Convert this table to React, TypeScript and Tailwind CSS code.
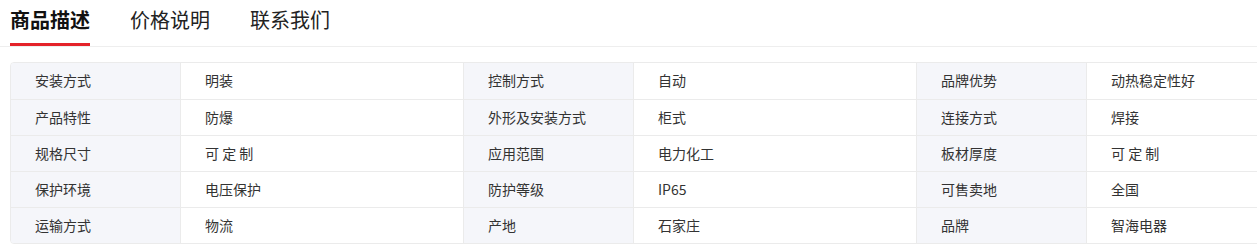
import React from "react";

const rows: [string, string][][] = [
  [
    ["安装方式", "明装"],
    ["控制方式", "自动"],
    ["品牌优势", "动热稳定性好"],
  ],
  [
    ["产品特性", "防爆"],
    ["外形及安装方式", "柜式"],
    ["连接方式", "焊接"],
  ],
  [
    ["规格尺寸", "可 定 制"],
    ["应用范围", "电力化工"],
    ["板材厚度", "可 定 制"],
  ],
  [
    ["保护环境", "电压保护"],
    ["防护等级", "IP65"],
    ["可售卖地", "全国"],
  ],
  [
    ["运输方式", "物流"],
    ["产地", "石家庄"],
    ["品牌", "智海电器"],
  ],
];

const tabs = ["商品描述", "价格说明", "联系我们"];

const App = () => {
  return (
    <div
      className="w-[1257px] h-[247px] overflow-hidden bg-white text-[#333]"
      style={{ fontFamily: '"Noto Sans CJK SC", "Noto Sans", sans-serif' }}
    >
      <div className="flex gap-10 px-[10px] h-[47px] border-b border-[#eeeeee]">
        {tabs.map((t, i) => (
          <div
            key={t}
            className={
              i === 0
                ? "h-[46px] pt-[5px] text-[20px] leading-[30px] font-bold text-[#111] border-b-[3px] border-[#e4222a]"
                : "h-[46px] pt-[5px] text-[20px] leading-[30px] text-[#222]"
            }
          >
            {t}
          </div>
        ))}
      </div>

      <div className="mt-[15px] ml-[10px] w-[1360px] border border-[#ebebeb] rounded-[4px] overflow-hidden">
        {rows.map((row, r) => (
          <div
            key={r}
            className={
              r === 0
                ? "grid grid-cols-[170px_283px_170px_283px_170px_283px] h-[36px]"
                : "grid grid-cols-[170px_283px_170px_283px_170px_283px] h-[36px] border-t border-[#ebebeb]"
            }
          >
            {row.map(([k, v]) => (
              <React.Fragment key={k}>
                <div className="flex items-center pl-[24px] pb-[1px] bg-[#f5f6fa] border-r border-[#ebebeb] text-[14px]">
                  {k}
                </div>
                <div className="flex items-center pl-[24px] pb-[1px] border-r border-[#ebebeb] text-[14px]">
                  {v}
                </div>
              </React.Fragment>
            ))}
          </div>
        ))}
      </div>
    </div>
  );
};

export default App;
